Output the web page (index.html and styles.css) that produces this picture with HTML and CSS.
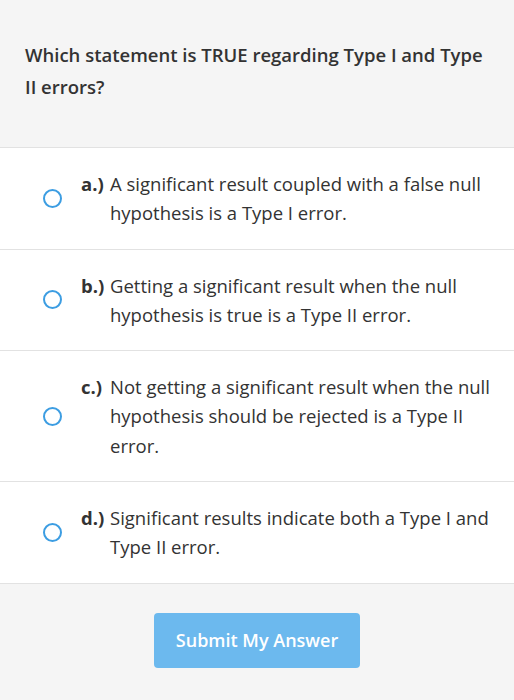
FILE: index.html
```html
<!DOCTYPE html>
<html>
<head>
<meta charset="utf-8">
<link rel="stylesheet" href="styles.css">
</head>
<body>
<div class="question">Which statement is TRUE regarding Type I and Type II errors?</div>
<ul class="options">
  <li class="option"><span class="radio"></span><span class="letter">a.)</span><span class="text">A significant result coupled with a false null hypothesis is a Type I error.</span></li>
  <li class="option"><span class="radio"></span><span class="letter">b.)</span><span class="text">Getting a significant result when the null hypothesis is true is a Type II error.</span></li>
  <li class="option"><span class="radio"></span><span class="letter">c.)</span><span class="text">Not getting a significant result when the null hypothesis should be rejected is a Type II error.</span></li>
  <li class="option"><span class="radio"></span><span class="letter">d.)</span><span class="text">Significant results indicate both a Type I and Type II error.</span></li>
</ul>
<div class="actions"><button class="submit">Submit My Answer</button></div>
</body>
</html>
```
FILE: styles.css
```css
html, body {
  margin: 0;
  padding: 0;
}
body {
  background: #f5f5f5;
  font-family: "Open Sans", "Liberation Sans", sans-serif;
  color: #333333;
  width: 514px;
}
.question {
  padding: 39px 25px 44px 25px;
  font-size: 18.5px;
  line-height: 32px;
  font-weight: 600;
  border-bottom: 1px solid #e2e2e2;
}
.options {
  list-style: none;
  margin: 0;
  padding: 0;
  background: #ffffff;
}
.option {
  display: flex;
  align-items: center;
  padding: 21px 18px 21px 0;
  border-bottom: 1px solid #e2e2e2;
  font-size: 18.5px;
  line-height: 29.3px;
}
.radio {
  flex: none;
  width: 15px;
  height: 15px;
  border: 2.5px solid #3c9de2;
  border-radius: 50%;
  margin-left: 43px;
  margin-right: 19px;
}
.letter {
  flex: none;
  width: 29px;
  font-weight: 700;
  align-self: flex-start;
}
.text {
  flex: 1;
}
.actions {
  display: flex;
  justify-content: center;
  padding-top: 29px;
}
.submit {
  width: 206px;
  height: 55px;
  background: #6cb9ee;
  color: #ffffff;
  border: none;
  border-radius: 4px;
  font-family: "Open Sans", "Liberation Sans", sans-serif;
  font-size: 18px;
  font-weight: 600;
}
```
